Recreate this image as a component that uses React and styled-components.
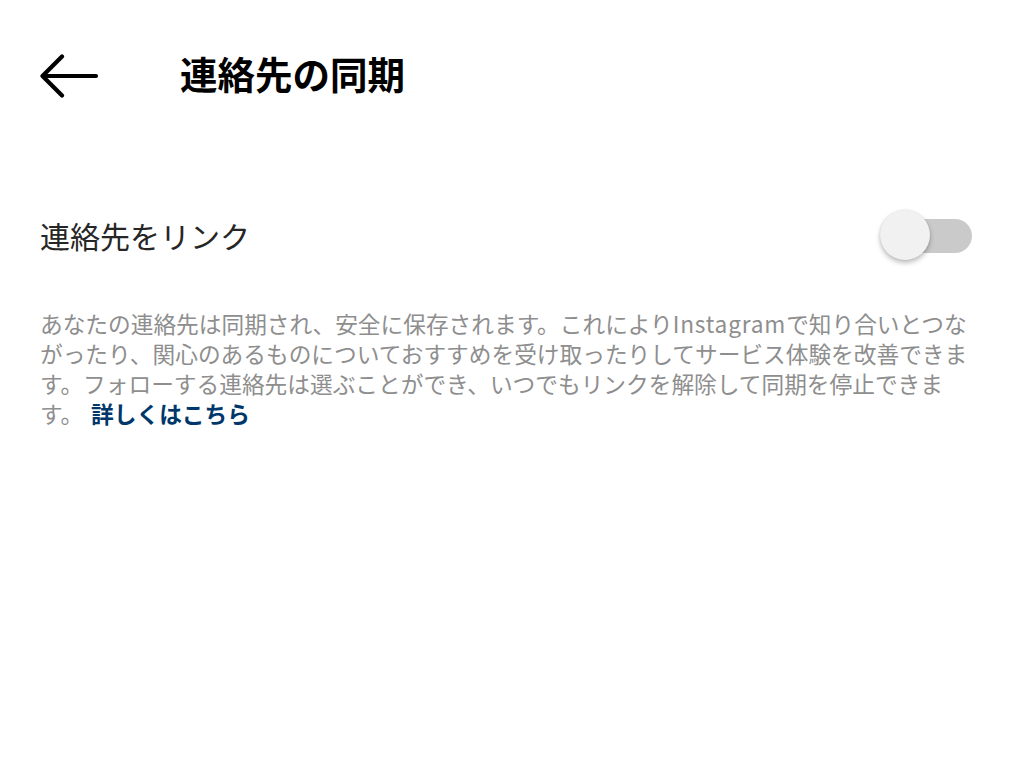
import styled, { createGlobalStyle } from "styled-components";

const GlobalStyle = createGlobalStyle`
  html, body {
    margin: 0;
    padding: 0;
    background: #ffffff;
  }
  body {
    font-family: "Noto Sans CJK JP", sans-serif;
  }
`;

const Page = styled.div`
  width: 1024px;
  min-height: 764px;
  background: #ffffff;
  padding: 0 40px;
  box-sizing: border-box;
`;

const Header = styled.div`
  display: flex;
  align-items: center;
  height: 152px;
`;

const BackButton = styled.button`
  width: 140px;
  height: 60px;
  padding: 0;
  border: none;
  background: none;
  display: flex;
  align-items: center;
  cursor: pointer;
`;

const Title = styled.h1`
  margin: 0 0 6px;
  font-family: "Noto Sans CJK JP", sans-serif;
  font-weight: 700;
  font-size: 37.5px;
  color: #000000;
  line-height: 1;
`;

const Row = styled.div`
  display: flex;
  align-items: center;
  justify-content: space-between;
  height: 64px;
  margin-top: 51px;
`;

const Label = styled.span`
  font-family: "Noto Sans CJK JP", sans-serif;
  font-size: 30px;
  color: #262626;
`;

const Switch = styled.div`
  position: relative;
  width: 92px;
  height: 52px;
  margin-right: 12px;
  margin-bottom: 3px;
`;

const Track = styled.div`
  position: absolute;
  right: 0;
  top: 11px;
  width: 80px;
  height: 34px;
  border-radius: 17px;
  background: ${(p) => (p.$on ? "#0095f6" : "#cacaca")};
`;

const Thumb = styled.div`
  position: absolute;
  left: 0;
  top: 2px;
  width: 50px;
  height: 50px;
  border-radius: 50%;
  background: #f1f1f1;
  box-shadow: 0 3px 5px rgba(0, 0, 0, 0.25), 0 0 2px rgba(0, 0, 0, 0.12);
`;

const Description = styled.p`
  width: 940px;
  margin: 42px 0 0;
  font-family: "Noto Sans CJK JP", sans-serif;
  font-size: 22.7px;
  line-height: 30px;
  color: #8e8e8e;
  line-break: strict;
`;

const Latin = styled.span`
  letter-spacing: 0.8px;
`;

const Link = styled.a`
  display: inline-block;
  margin-left: 8px;
  color: #00376b;
  font-weight: 700;
  text-decoration: none;
`;

const BackArrow = () => (
  <svg width="60" height="48" viewBox="0 0 60 48">
    <path
      d="M56 24H3M22 4.5L2.5 24L22 43.5"
      fill="none"
      stroke="#000"
      strokeWidth="4.2"
      strokeLinecap="round"
      strokeLinejoin="round"
    />
  </svg>
);

export default function App() {
  return (
    <>
      <GlobalStyle />
      <Page>
        <Header>
          <BackButton aria-label="戻る">
            <BackArrow />
          </BackButton>
          <Title>連絡先の同期</Title>
        </Header>
        <Row>
          <Label>連絡先をリンク</Label>
          <Switch>
            <Track $on={false} />
            <Thumb />
          </Switch>
        </Row>
        <Description>
          あなたの連絡先は同期され、安全に保存されます。これにより<Latin>Instagram</Latin>で知り合いとつながったり、関心のあるものについておすすめを受け取ったりしてサービス体験を改善できます。フォローする連絡先は選ぶことができ、いつでもリンクを解除して同期を停止できます。
          <Link href="#">詳しくはこちら</Link>
        </Description>
      </Page>
    </>
  );
}
